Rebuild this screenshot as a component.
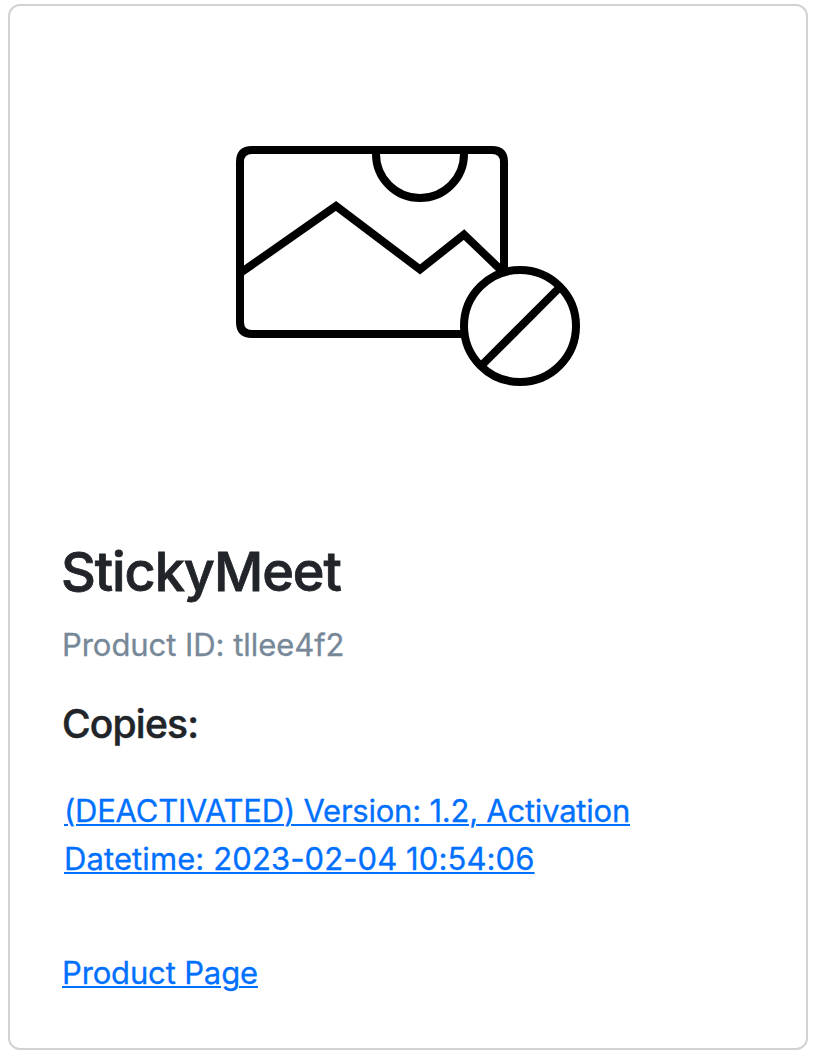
<article class="card">
  <svg class="picture" width="346" height="242" viewBox="235 145 346 242" fill="none" stroke="#000" stroke-width="8" aria-hidden="true">
    <path d="M463 334H252Q240 334 240 322V162Q240 150 252 150H492Q504 150 504 162V270" />
    <path d="M376 150V154A44 44 0 0 0 464 154V150" />
    <path d="M241 272.500L336 206L420 269.500L464 234.500L503 272" />
    <circle cx="520" cy="326" r="56" />
    <path d="M482 365L559 288" />
  </svg>
  <div class="body">
    <h1>StickyMeet</h1>
    <p class="product-id">Product ID: tllee4f2</p>
    <h2>Copies:</h2>
    <a class="copy" href="#copy"><span class="version">(DEACTIVATED) Version: 1.2, Activation</span><br /><span class="date">Datetime: 2023-02-04 10:54:06</span></a>
    <a class="page" href="#page">Product Page</a>
  </div>
</article>

<style>
  :global(body) { background: #fff; }
  .card {
    box-sizing: border-box;
    width: 800px;
    height: 1046px;
    margin: 4px 0 0 8px;
    border: 2px solid #d2d2d3;
    border-radius: 12px;
    background: #fff;
    font-family: Inter, sans-serif;
    font-size: 31px;
    line-height: 48px;
    color: #212529;
    display: flow-root;
    -webkit-text-stroke-width: 0.3px;
  }
  .picture { display: block; margin: 139px 0 0 225px; }
  .body { padding: 151px 52px 0; }
  h1, h2, p { margin: 0; white-space: nowrap; }
  h1 { font-size: 54px; font-weight: 500; line-height: 67px; margin-left: -1px; letter-spacing: -1.1px; -webkit-text-stroke-width: 0.8px; }
  .product-id { color: #778899; margin-top: 16px; letter-spacing: -0.05px; }
  h2 { font-size: 39px; font-weight: 500; line-height: 48px; margin-top: 31px; letter-spacing: -0.8px; -webkit-text-stroke-width: 0.5px; }
  a { display: block; width: max-content; color: #0070ff; text-underline-offset: 2px; text-decoration-line: underline; text-decoration-thickness: 2px; }
  .copy { margin: 39px 0 0 2px; }
  .version { letter-spacing: -0.23px; }
  .date { letter-spacing: 0.1px; }
  .page { margin-top: 66px; letter-spacing: -0.15px; }
</style>
